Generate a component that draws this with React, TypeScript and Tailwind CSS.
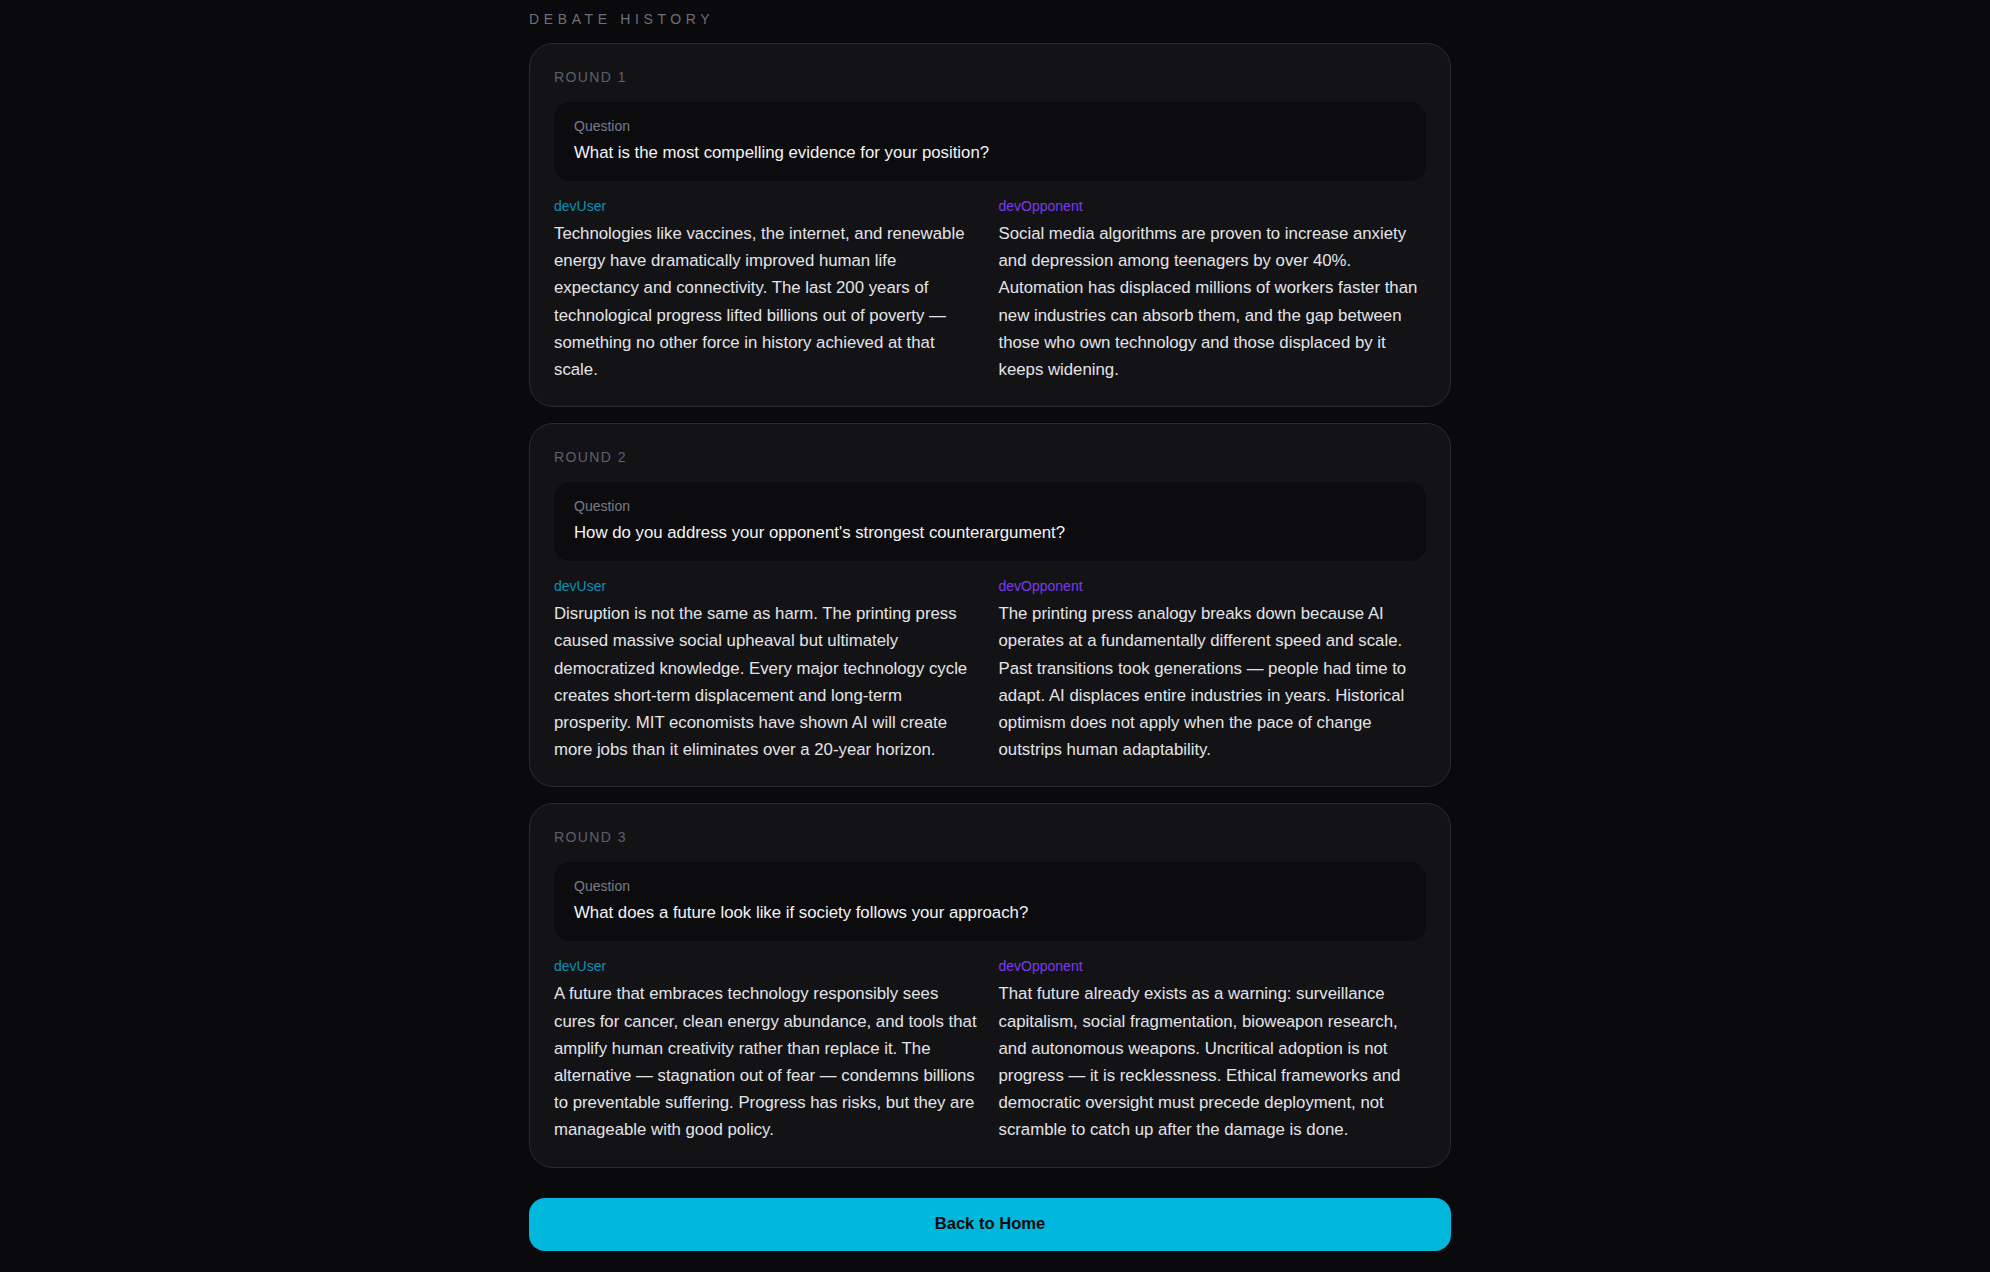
const rounds = [
  {
    question: "What is the most compelling evidence for your position?",
    user: "Technologies like vaccines, the internet, and renewable energy have dramatically improved human life expectancy and connectivity. The last 200 years of technological progress lifted billions out of poverty — something no other force in history achieved at that scale.",
    opponent: "Social media algorithms are proven to increase anxiety and depression among teenagers by over 40%. Automation has displaced millions of workers faster than new industries can absorb them, and the gap between those who own technology and those displaced by it keeps widening.",
  },
  {
    question: "How do you address your opponent's strongest counterargument?",
    user: "Disruption is not the same as harm. The printing press caused massive social upheaval but ultimately democratized knowledge. Every major technology cycle creates short-term displacement and long-term prosperity. MIT economists have shown AI will create more jobs than it eliminates over a 20-year horizon.",
    opponent: "The printing press analogy breaks down because AI operates at a fundamentally different speed and scale. Past transitions took generations — people had time to adapt. AI displaces entire industries in years. Historical optimism does not apply when the pace of change outstrips human adaptability.",
  },
  {
    question: "What does a future look like if society follows your approach?",
    user: "A future that embraces technology responsibly sees cures for cancer, clean energy abundance, and tools that amplify human creativity rather than replace it. The alternative — stagnation out of fear — condemns billions to preventable suffering. Progress has risks, but they are manageable with good policy.",
    opponent: "That future already exists as a warning: surveillance capitalism, social fragmentation, bioweapon research, and autonomous weapons. Uncritical adoption is not progress — it is recklessness. Ethical frameworks and democratic oversight must precede deployment, not scramble to catch up after the damage is done.",
  },
];

function Argument({ name, text, color }: { name: string; text: string; color: string }) {
  return (
    <div>
      <div className={`text-sm leading-5 mb-1 ${color}`}>{name}</div>
      <p className="text-[16.8px] leading-[27.2px] text-[#e4e4e7]">{text}</p>
    </div>
  );
}

export default function App() {
  return (
    <div className="min-h-screen bg-[#0a0a0c] pr-2.5 font-['Liberation_Sans',Arial,sans-serif]">
      <div className="w-[922px] mx-auto pt-[9px] pb-5">
        <h2 className="text-sm leading-5 tracking-[0.33em] text-[#6e6e7a] mb-[14px]">DEBATE HISTORY</h2>

        <div className="flex flex-col gap-4">
          {rounds.map((r, i) => (
            <div key={i} className="rounded-3xl border border-[#2a2a2f] bg-[#131316] px-6 pt-6 pb-[23px]">
              <div className="text-sm leading-[18px] tracking-widest text-[#5f5f6b]">ROUND {i + 1}</div>
              <div className="mt-4 rounded-2xl bg-[#0c0c0e] px-5 pt-[14px] pb-[15px]">
                <div className="text-sm leading-5 text-[#7a7a86]">Question</div>
                <div className="mt-[3px] text-[16.8px] leading-[27px] text-[#f4f4f5]">{r.question}</div>
              </div>
              <div className="mt-[15px] grid grid-cols-2 gap-[17px]">
                <Argument name="devUser" text={r.user} color="text-[#0891b2]" />
                <Argument name="devOpponent" text={r.opponent} color="text-[#7c3aed]" />
              </div>
            </div>
          ))}
        </div>

        <button className="mt-[30px] w-full h-[53px] rounded-2xl bg-[#00b8db] text-[16.6px] font-bold text-[#0a0a0c]">
          Back to Home
        </button>
      </div>
    </div>
  );
}
